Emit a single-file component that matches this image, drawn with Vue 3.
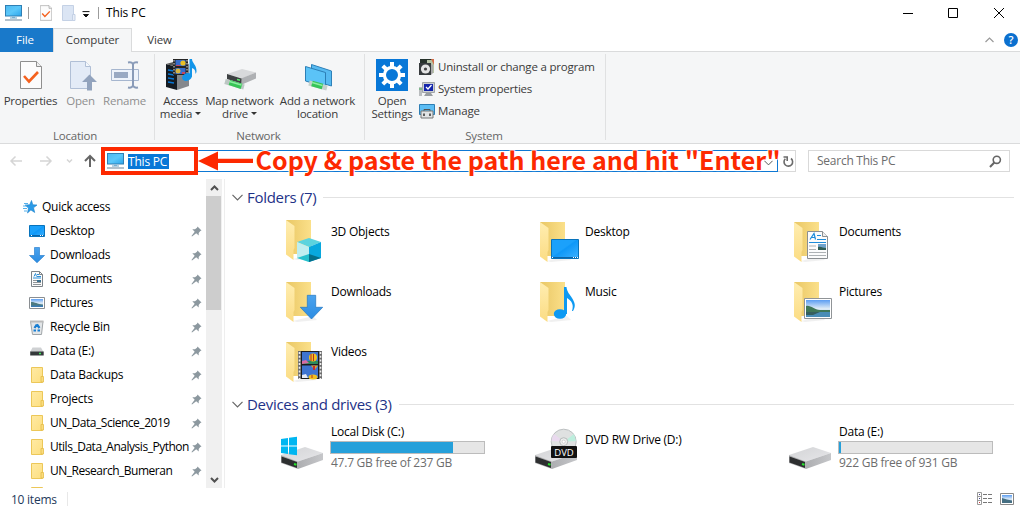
<script setup>
const locationTools = [
  { label: ['Properties'], icon: 'properties', cls: 'w-prop' },
  { label: ['Open'], icon: 'open', cls: 'w-open', off: true },
  { label: ['Rename'], icon: 'rename', cls: 'w-rename', off: true },
]
const networkTools = [
  { label: ['Access', 'media'], icon: 'media', cls: 'w-media', drop: true },
  { label: ['Map network', 'drive'], icon: 'mapdrive', cls: 'w-map', drop: true },
  { label: ['Add a network', 'location'], icon: 'netloc', cls: 'w-add' },
]
const systemLinks = [
  { label: 'Uninstall or change a program', icon: 'uninstall' },
  { label: 'System properties', icon: 'sysprops' },
  { label: 'Manage', icon: 'manage' },
]
const quick = [
  { label: 'Desktop', icon: 's-desktop' },
  { label: 'Downloads', icon: 's-down' },
  { label: 'Documents', icon: 's-doc' },
  { label: 'Pictures', icon: 's-pic' },
  { label: 'Recycle Bin', icon: 's-bin' },
  { label: 'Data (E:)', icon: 's-drive' },
  { label: 'Data Backups', icon: 's-folder' },
  { label: 'Projects', icon: 's-folder' },
  { label: 'UN_Data_Science_2019', icon: 's-folder', tight: true },
  { label: 'Utils_Data_Analysis_Python', icon: 's-folder', tight: true },
  { label: 'UN_Research_Bumeran', icon: 's-folder', tight: true },
  { label: '', icon: 's-folder' },
]
const folders = [
  { label: '3D Objects', icon: 'o-cube', up: true },
  { label: 'Desktop', icon: 'o-desktop' },
  { label: 'Documents', icon: 'o-doc' },
  { label: 'Downloads', icon: 'o-down' },
  { label: 'Music', icon: 'o-music' },
  { label: 'Pictures', icon: 'o-pic' },
  { label: 'Videos', icon: 'o-video' },
]
const drives = [
  { label: 'Local Disk (C:)', badge: 'd-win', used: 80, free: '47.7 GB free of 237 GB' },
  { label: 'DVD RW Drive (D:)', badge: 'd-dvd' },
  { label: 'Data (E:)', used: 1.2, free: '922 GB free of 931 GB' },
]
</script>

<template>
  <div class="window">
    <svg class="defs" width="0" height="0" aria-hidden="true">
      <defs>
        <linearGradient id="gScreen" x1="0" y1="0" x2="1" y2="1">
          <stop offset="0" stop-color="#4db9f0" /><stop offset=".5" stop-color="#5cc8fa" /><stop offset="1" stop-color="#2ba4ea" />
        </linearGradient>
        <linearGradient id="gBack" x1="0" y1="0" x2="1" y2="0">
          <stop offset="0" stop-color="#e9c765" /><stop offset="1" stop-color="#fbe08a" />
        </linearGradient>
        <linearGradient id="gFlap" x1="0" y1="0" x2="0" y2="1">
          <stop offset="0" stop-color="#ffedb0" /><stop offset="1" stop-color="#fbdc83" />
        </linearGradient>
        <linearGradient id="gDesk" x1="0" y1="0" x2="1" y2="1">
          <stop offset="0" stop-color="#1ba1fb" /><stop offset=".45" stop-color="#1ba1fb" /><stop offset=".5" stop-color="#0e98f8" /><stop offset="1" stop-color="#3fb2ff" />
        </linearGradient>
        <linearGradient id="gArrow" x1="0" y1="0" x2="0" y2="1">
          <stop offset="0" stop-color="#4ba3ee" /><stop offset="1" stop-color="#2b8ce2" />
        </linearGradient>
        <linearGradient id="gTop" x1="0" y1="0" x2="1" y2="1">
          <stop offset="0" stop-color="#d3d4d6" /><stop offset="1" stop-color="#e6e6e9" />
        </linearGradient>
        <linearGradient id="gSide" x1="0" y1="0" x2="1" y2="0">
          <stop offset="0" stop-color="#adaeb1" /><stop offset="1" stop-color="#c6c7ca" />
        </linearGradient>
        <linearGradient id="gSky" x1="0" y1="0" x2="0" y2="1">
          <stop offset="0" stop-color="#5b9df2" /><stop offset=".5" stop-color="#dceaf6" /><stop offset="1" stop-color="#b8d4ea" />
        </linearGradient>
        <linearGradient id="gSmallF" x1="0" y1="0" x2="1" y2="1">
          <stop offset="0" stop-color="#ffeaa4" /><stop offset="1" stop-color="#fddf80" />
        </linearGradient>

        <symbol id="pc" viewBox="0 0 17 16">
          <rect x=".5" y=".5" width="16" height="10.5" fill="url(#gScreen)" stroke="#2f7fb4" />
          <path d="M7 11.5h3v1.5H7z" fill="#86b9d8" /><path d="M5 13h7" stroke="#6fa4c6" />
          <path d="M0 15h17" stroke="#8a9fb0" stroke-width="1.3" />
        </symbol>
        <symbol id="pageCheck" viewBox="0 0 22 28">
          <path d="M.5.5h16l5 5v22H.5z" fill="#fcfcfc" stroke="#8f8f8f" /><path d="M16.500 .5v5h5" fill="#eee" stroke="#8f8f8f" />
          <path d="M4 15l5 5.500L18 11" fill="none" stroke="#f4611e" stroke-width="2.600" />
        </symbol>
        <symbol id="properties" viewBox="0 0 32 32"><use href="#pageCheck" x="5" y="2" width="22" height="28" /></symbol>
        <symbol id="open" viewBox="0 0 32 32">
          <path d="M5.500 2.500h15l5 5v22h-20z" fill="#e3ebf7" stroke="#b0bfd6" /><path d="M20.500 2.500v5h5" fill="#f3f7fc" stroke="#b0bfd6" />
          <path d="M24.500 15.500l7.500 7.500h-5v8.500h-5V23h-5z" fill="#92a3bd" />
        </symbol>
        <symbol id="rename" viewBox="0 0 32 32">
          <path d="M2.500 10.500h27v11h-27z" fill="#eef3fb" stroke="#a6b6cf" /><path d="M5 13h14v6H5z" fill="#99a9c3" />
          <path d="M19 3.500c3-.5 5 0 5 2.500v20c0 2-2 3-5 2.500M29 3.500c-3-.5-5 0-5 2.500v20c0 2 2 3 5 2.500" fill="none" stroke="#899bb8" stroke-width="2" />
        </symbol>
        <symbol id="media" viewBox="0 0 32 32">
          <path d="M1 5l11 3v23L1 28z" fill="#151b22" /><path d="M12 8l12-3v22l-12 4z" fill="#85888c" /><path d="M1 5l11-3 12 3-12 3z" fill="#555" />
          <path d="M3 11l6 1M3 15l6 1M3 19l6 1M3 23l6 1" stroke="#0878d8" stroke-width="1.400" />
          <path d="M8 0h15v16H8z" fill="#252525" /><path d="M10.500 1h10v6h-10zM10.500 9h10v6h-10z" fill="#366dcc" />
          <circle cx="18" cy="4" r="2.600" fill="#eabf25" /><circle cx="13" cy="12" r="2.500" fill="#d8b642" /><path d="M11 6h4v1h-4zM17 13h3v2h-3z" fill="#c5465d" />
          <path d="M9 1v15M22 1v15" stroke="#ddd" stroke-dasharray="1.500 1.500" />
          <ellipse cx="22" cy="18" rx="5" ry="3.700" transform="rotate(-20 22 18)" fill="#1295e9" /><path d="M24.500 17V0H27c0 4 5 6 4.500 13l-1 2c0-4-1-5-3.500-6v9z" fill="#1295e9" />
        </symbol>
        <symbol id="mapdrive" viewBox="0 0 32 32">
          <path d="M1 22.500l19 5.500" stroke="#bcc6c3" stroke-width="5" />
          <path d="M3 15l15-5L32 13.500l-14 6z" fill="#d8d9db" /><path d="M17 19.500l15-6v6l-14 6z" fill="#aeb0b3" /><path d="M3 15l14.500 4.500v5L3 20z" fill="#3d4042" /><path d="M13 20.500l3 .8" stroke="#5ce86d" stroke-width="1.500" />
          <path d="M5.500 23.500l12 3.800" stroke="#37c556" stroke-width="5.500" /><path d="M5.500 22.500l12 3.500" stroke="#8ceda0" stroke-width="1.500" />
        </symbol>
        <symbol id="netloc" viewBox="0 0 32 32">
          <path d="M9.500 5.500L29.500 12v15l-20-6z" fill="#56baf1" stroke="#2e81b9" />
          <path d="M3.500 7.500l20 6v14.500l-20-6z" fill="#5bc3f7" stroke="#2c7fb6" /><path d="M7 24l18 5" stroke="#c4d0cc" stroke-width="5" /><path d="M10 24.500l10.500 3" stroke="#37c45a" stroke-width="5.500" /><path d="M10 23.500l10.500 3" stroke="#8ceda0" stroke-width="1.500" />
        </symbol>
        <symbol id="gear" viewBox="0 0 32 32">
          <path d="M0 0h32v32H0z" fill="#0877d7" />
          <circle cx="16" cy="16" r="7.600" fill="none" stroke="#fff" stroke-width="3.200" />
          <g stroke="#fff" stroke-width="4"><path d="M16 3v5M16 24v5M3 16h5M24 16h5M6.800 6.800l3.200 3.200M22 22l3.200 3.200M6.800 25.200L10 22M22 10l3.200-3.200" /></g>
        </symbol>
        <symbol id="uninstall" viewBox="0 0 16 16">
          <path d="M1 0h12v6H1z" fill="#26312a" /><path d="M8 1h7v13H8z" fill="#b6c3a6" /><path d="M12 0h3v6z" fill="#d36d48" /><path d="M0 4h12v12H0z" fill="#373b3d" />
          <circle cx="6.500" cy="10" r="4.600" fill="#e4e4e4" /><circle cx="6.500" cy="10" r="1.600" fill="#444" /><path d="M12 5l2 1v8l-2 2z" fill="#aaa" />
        </symbol>
        <symbol id="sysprops" viewBox="0 0 16 16">
          <path d="M0 6h3v9H0z" fill="#b9bcbe" /><path d="M3.500 1.500h12v10h-12z" fill="#cdd0d3" stroke="#a0a4a8" /><path d="M5 3h9v7H5z" fill="#1425ac" />
          <path d="M7 6l2 2 3.500-4" fill="none" stroke="#fff" stroke-width="1.300" /><path d="M7 12h5l2 3H5z" fill="#999da1" /><path d="M0 8h3" stroke="#45b05b" />
        </symbol>
        <symbol id="manage" viewBox="0 0 16 16">
          <path d="M.5 1.500h15v10H.5z" fill="#5cbdf4" stroke="#2e7eb4" /><path d="M5 6.500h6v2H5z" fill="none" stroke="#555" /><path d="M2 8h12v7H2z" fill="#e2e4e5" stroke="#777" /><path d="M5 10.500v2.500M11 10.500v2.500" stroke="#333" stroke-width="1.500" />
        </symbol>

        <symbol id="star" viewBox="0 0 14 14">
          <path d="M8.500.5l1.300 4.300 4.200.2-3.500 2.800 1.200 4.700-3.800-2.600L4.500 13l1-4.900L2 5l4.700-.2z" fill="#2b9be8" stroke="#1a7fc9" stroke-width=".6" /><path d="M1 3.500h4M0 6h4M0 8.500h4M1 11h3" stroke="#54b0ec" />
        </symbol>
        <symbol id="s-desktop" viewBox="0 0 16 16"><path d="M.5 2.500h15v11H.5z" fill="url(#gDesk)" stroke="#0873bc" /><path d="M1 12.500h14" stroke="#0c65a8" /><path d="M2 12.500h1M11 12.500h1M13 12.500h1" stroke="#fff" /></symbol>
        <symbol id="s-down" viewBox="0 0 16 16"><path d="M5.500.5h5v8h5L8 15.700.5 8.500h5z" fill="url(#gArrow)" stroke="#2c82d0" stroke-width=".7" /></symbol>
        <symbol id="s-doc" viewBox="0 0 16 16">
          <path d="M2.500.5h8l3 3v12h-11z" fill="#fbfbfb" stroke="#7d8388" /><path d="M10.500.5v3h3" fill="none" stroke="#7d8388" /><path d="M5 5.500l1.500-3 1 3M8 3.500h2M4 7h8M8 5.500h4" fill="none" stroke="#2c8fd8" /><path d="M4 9.500h4M4 11.500h8M4 13.500h8" stroke="#909599" /><path d="M8 9h4v2H8z" fill="#397090" />
        </symbol>
        <symbol id="s-pic" viewBox="0 0 16 16"><path d="M.5 2.500h15v11H.5z" fill="#fff" stroke="#8a8e92" /><path d="M2 4h12v8H2z" fill="url(#gSky)" /><path d="M2 7c4 0 6 2 12 2.500V12H2z" fill="#4d7a80" /><path d="M2 10.500h12V12H2z" fill="#3a7cb5" /></symbol>
        <symbol id="s-bin" viewBox="0 0 16 16"><path d="M1.500 2.500h12.500l-1.500 13h-9z" fill="#e3e6e8" stroke="#a0a5a8" /><path d="M1 2.500h13.500" stroke="#bbb" stroke-width="2" /><path d="M7.800 5.500L5.500 9M8 5.500L10.500 9M4.500 11.500H7M8.500 11.500H11" stroke="#197ed2" stroke-width="2.200" /></symbol>
        <symbol id="s-drive" viewBox="0 0 16 16"><path d="M3.500 4.500h8.500L14.500 9H1.200z" fill="#cfd1d3" /><path d="M1.200 8.500h13.500v4H1.200z" fill="#35393b" /><path d="M10 10.500h2" stroke="#40e55b" stroke-width="1.500" /></symbol>
        <symbol id="s-folder" viewBox="0 0 16 16"><path d="M2.500.5h11v15h-11z" fill="url(#gSmallF)" stroke="#ecc758" /><path d="M12 9.500h2.500v5.500H12z" fill="#fbdc7d" stroke="#e5bd49" stroke-width=".8" /></symbol>
        <symbol id="pin" viewBox="0 0 11 11"><path d="M6.500 0.500L10.500 4.500 9.300 5 7.700 7v2.500L5.200 7.200 1 10.500.5 10 3.700 5.800 1.300 3.300H4L6 1.700z" fill="#8c989f" /></symbol>

        <symbol id="folder" viewBox="0 0 48 48">
          <path d="M13 45l4 1 20-2-4-4z" fill="#e9e9e9" opacity=".7" />
          <path d="M6 6h25v34H13z" fill="url(#gBack)" /><path d="M6 6l8.500 6v22L13.500 36v10L6 40.500z" fill="url(#gFlap)" />
        </symbol>
        <symbol id="o-cube" viewBox="0 0 48 48"><path d="M17 26l12-4 12 4-12 5z" fill="#5cd3de" /><path d="M17 26l12 5v15l-12-4z" fill="#bfeef0" /><path d="M29 31l12-5v16l-12 4z" fill="#08a8de" /><path d="M17 42l12-4v8z" fill="#25c1cd" /><path d="M29 38l12 4-12 4z" fill="#046f8a" /></symbol>
        <symbol id="o-desktop" viewBox="0 0 48 48"><path d="M17.500 23.500h27v19h-27z" fill="url(#gDesk)" stroke="#0873bc" /><path d="M18 41.500h26" stroke="#0c65a8" /><path d="M18 41.500h1M39 41.500h1M41 41.500h1M43 41.500h1" stroke="#fff" /></symbol>
        <symbol id="o-doc" viewBox="0 0 48 48">
          <path d="M19.500 15.500h15l5 5v22h-20z" fill="#fcfcfc" stroke="#8b8f92" /><path d="M34.500 15.500v5h5" fill="#eee" stroke="#8b8f92" />
          <path d="M22 23.500l4-6 1.500 6M23.500 21.500h3.500M29 19.500h4M29 23.500h9M21 26.500h17" fill="none" stroke="#1e8cdb" stroke-width="1.200" /><path d="M21 30h7M21 33.500h7M21 36.500h17M21 39.500h17" stroke="#aeb2b5" /><path d="M30 28h8v6h-8z" fill="#6fa2cb" /><path d="M30 31c3-1 5 1 8 1v2h-8z" fill="#305d53" />
        </symbol>
        <symbol id="o-down" viewBox="0 0 48 48"><path d="M27.300 19.300h8.400v12h7L31.500 43 20.300 31.300h7z" fill="url(#gArrow)" stroke="#2377c2" stroke-width=".7" /></symbol>
        <symbol id="o-music" viewBox="0 0 48 48"><ellipse cx="26" cy="38" rx="6.200" ry="4.800" fill="#0c99f2" /><path d="M30 38V11h2.500c.5 5 3 7 5.500 11 3 5 4 8 1 13h-1c2-6 0-10-5-13v16z" fill="#0c99f2" /></symbol>
        <symbol id="o-pic" viewBox="0 0 48 48"><path d="M16.500 22.500h27v20h-27z" fill="#fff" stroke="#909497" /><path d="M18 24h24v17H18z" fill="url(#gSky)" /><path d="M18 30c5-1 8 4 14 4h10v2H18z" fill="#3f7758" /><path d="M18 36h24v5H18z" fill="#4a8db6" /><path d="M18 36h14l-7 3h-7z" fill="#355f5f" /></symbol>
        <symbol id="o-video" viewBox="0 0 48 48">
          <path d="M18 15h24v28H18z" fill="#6d6d6d" /><path d="M21 15h18v28H21z" fill="#1d1d1d" /><path d="M22 16h16v12H22zM22 29.500h16V42H22z" fill="#3e74cf" />
          <path d="M22 25h16v3H22z" fill="#2b8a5b" /><path d="M22 25l4-1 3 3-7 1z" fill="#d86ba4" /><circle cx="33" cy="21.500" r="4" fill="#f1c11d" /><path d="M31 18v7M33.500 18v7" stroke="#b52c27" /><path d="M31 29.500h7L34.500 34z" fill="#e2a129" /><path d="M33 30h2v4h-2z" fill="#c52d2d" /><ellipse cx="33" cy="41" rx="4.500" ry="2.500" fill="#f1c11d" /><path d="M32 39v3" stroke="#b52c27" /><path d="M22 39l4-1 2 4h-6z" fill="#e6eaf4" />
          <path d="M19.500 16v27M40.500 16v27" stroke="#eee" stroke-width="1.600" stroke-dasharray="2 1.700" />
        </symbol>
        <symbol id="drive" viewBox="0 0 48 48"><path d="M1 30l24-8 18 6-25 8.500z" fill="url(#gTop)" /><path d="M18 36.500L43 28v7L18 44z" fill="url(#gSide)" /><path d="M1 30l17 6.500V44L1 38z" fill="#b0b1b3" /><path d="M1.500 31.500L17 37v6L1.500 37.500z" fill="#2d2f30" /><path d="M14 39l2.500.8" stroke="#25e42b" stroke-width="2" /></symbol>
        <symbol id="d-win" viewBox="0 0 48 48"><path d="M1 14l7-1v7.500H1zM9 12.800L17 11.700v8.800H9zM1 21.500h7V29l-7-1zM9 21.500h8v8.800L9 29.200z" fill="#00b6f1" /></symbol>
        <symbol id="d-dvd" viewBox="0 0 48 48">
          <circle cx="29.700" cy="16.700" r="12.500" fill="#dfe1e1" stroke="#bcc0c1" /><path d="M29.700 16.700L20 9a12 12 0 0 0-2.500 7z" fill="#e9d9ee" /><path d="M29.700 16.700L40 9l2 7z" fill="#bdeedd" /><circle cx="29.700" cy="16.700" r="4" fill="#eceded" stroke="#b7bbbb" /><circle cx="29.700" cy="16.700" r="1.600" fill="#fff" stroke="#bbb" stroke-width=".6" />
          <rect x="17" y="21" width="26" height="12" rx="1" fill="#111" />
        </symbol>
        <symbol id="chev" viewBox="0 0 11 7"><path d="M.5 .8L5.500 5.800l5-5" fill="none" stroke="currentColor" stroke-width="1.200" /></symbol>
      </defs>
    </svg>

    <header class="title">
      <svg class="t-pc" width="17" height="16"><use href="#pc" /></svg>
      <i class="t-sep"></i>
      <svg class="t-check" width="12" height="16"><use href="#pageCheck" /></svg>
      <svg class="t-folder" width="14" height="16" viewBox="0 0 14 16"><path d="M.5.500h11v15H.5z" fill="#dbe5f4" stroke="#c4d1e5" /><path d="M10.500 9.500h2.500v6h-2.500z" fill="#e8eef8" stroke="#c4d1e5" /></svg>
      <svg class="t-drop" width="8" height="7" viewBox="0 0 8 7"><path d="M.5.600h7M1.500 3.500h5L4 6z" fill="#111" stroke="#111" stroke-width="1" /></svg>
      <i class="t-sep two"></i>
      <span class="t-name">This PC</span>
      <svg class="winbtns" width="104" height="12" viewBox="0 0 104 12" fill="none" stroke="#000"><path d="M1 6.500h10M46.500 1.500h9v9h-9zM92 1l10 10M102 1L92 11" /></svg>
    </header>

    <nav class="tabs">
      <span class="tab file">File</span><span class="tab current">Computer</span><span class="tab view">View</span>
      <svg class="collapse" width="9" height="6" viewBox="0 0 9 6"><path d="M.5 5l4-4 4 4" fill="none" stroke="#999" stroke-width="1.200" /></svg>
      <span class="help">?</span>
    </nav>

    <section class="ribbon">
      <div class="group g-loc">
        <div class="tools">
          <div v-for="t in locationTools" :key="t.icon" class="tool" :class="[t.cls, { off: t.off }]">
            <svg width="32" height="32"><use :href="'#' + t.icon" /></svg><span v-for="l in t.label" :key="l">{{ l }}</span>
          </div>
        </div>
        <div class="caption">Location</div>
      </div>
      <div class="group g-net">
        <div class="tools">
          <div v-for="t in networkTools" :key="t.icon" class="tool" :class="t.cls">
            <svg width="32" height="32"><use :href="'#' + t.icon" /></svg>
            <span v-for="(l, i) in t.label" :key="l">{{ l }}<b v-if="t.drop && i === 1" class="caret"></b></span>
          </div>
        </div>
        <div class="caption">Network</div>
      </div>
      <div class="group g-sys">
        <div class="tools">
          <div class="tool w-set"><svg width="32" height="32"><use href="#gear" /></svg><span>Open</span><span>Settings</span></div>
          <div class="links">
            <div v-for="s in systemLinks" :key="s.icon" class="link"><svg width="16" height="16"><use :href="'#' + s.icon" /></svg><span>{{ s.label }}</span></div>
          </div>
        </div>
        <div class="caption">System</div>
      </div>
    </section>

    <section class="address">
      <svg class="arrows" width="101" height="16" viewBox="0 0 101 16" fill="none">
        <g stroke="#d5d5d5" stroke-width="1.500"><path d="M22 8H11M15.500 3.500L11 8l4.500 4.500M40 8h11M46.500 3.500L51 8l-4.500 4.500" /><path d="M67 6.500l2.500 2.500L72 6.500" /></g>
        <path d="M90 14V3M85 8l5-5 5 5" stroke="#666" stroke-width="2" />
      </svg>
      <div class="path">
        <div class="redbox"><svg width="17" height="16"><use href="#pc" /></svg><span class="selected">This PC</span></div>
        <div class="note">
          <svg width="55" height="20" viewBox="0 0 55 20"><path d="M0 10L20 .5v7.300h35v4.200H20v7.500z" fill="#fd2900" /></svg>
          <span>Copy &amp; paste the path here and hit "Enter"</span>
        </div>
        <svg class="path-chev" width="9" height="6"><use href="#chev" /></svg>
      </div>
      <div class="refresh"><svg width="12" height="13" viewBox="0 0 12 13" fill="none" stroke="#6b6b6b" stroke-width="1.600"><path d="M9 3.500A4.300 4.300 0 1 1 3.300 3.800" /><path d="M1.500 2h3.700v4" /></svg></div>
      <div class="search"><span>Search This PC</span><svg width="13" height="13" viewBox="0 0 13 13" fill="none" stroke="#666" stroke-width="1.600"><circle cx="7.800" cy="4.800" r="3.600" /><path d="M5.300 7.500L1 12" stroke-width="2" /></svg></div>
    </section>

    <main class="body">
      <aside class="side">
        <div class="row root"><svg width="14" height="14"><use href="#star" /></svg><span>Quick access</span></div>
        <div v-for="(q, i) in quick" :key="i" class="row" :class="{ tight: q.tight }">
          <svg width="16" height="16"><use :href="'#' + q.icon" /></svg><span>{{ q.label }}</span>
          <svg v-if="q.label" class="pin" width="11" height="11"><use href="#pin" /></svg>
        </div>
      </aside>
      <div class="scroll">
        <svg width="9" height="6" viewBox="0 0 9 6"><path d="M1 5l3.500-3.500L8 5" fill="none" stroke="#505050" stroke-width="2" /></svg>
        <div class="thumb"></div>
        <svg class="dn" width="9" height="6" viewBox="0 0 9 6"><path d="M1 1l3.500 3.500L8 1" fill="none" stroke="#505050" stroke-width="2" /></svg>
      </div>
      <div class="content">
        <h2><svg width="11" height="7"><use href="#chev" /></svg><span>Folders (7)</span><i></i></h2>
        <div class="grid">
          <div v-for="f in folders" :key="f.label" class="item">
            <svg width="48" height="48" viewBox="0 0 48 48"><use href="#folder" :y="f.up ? -2 : 0" width="48" height="48" /><use :href="'#' + f.icon" width="48" height="48" /></svg>
            <span class="name">{{ f.label }}</span>
          </div>
        </div>
        <h2><svg width="11" height="7"><use href="#chev" /></svg><span>Devices and drives (3)</span><i></i></h2>
        <div class="grid drives">
          <div v-for="d in drives" :key="d.label" class="item">
            <svg width="48" height="48" viewBox="0 0 48 48"><use href="#drive" width="48" height="48" /><use v-if="d.badge" :href="'#' + d.badge" width="48" height="48" /><text v-if="d.badge === 'd-dvd'" class="dvd" x="30" y="30.500">DVD</text></svg>
            <div v-if="d.free" class="info">
              <span>{{ d.label }}</span>
              <div class="bar"><div :style="{ width: d.used + '%' }"></div></div>
              <span class="free">{{ d.free }}</span>
            </div>
            <span v-else class="name">{{ d.label }}</span>
          </div>
        </div>
      </div>
    </main>

    <footer class="status">
      <span>10 items</span><i></i>
      <svg class="v-list" width="16" height="13" viewBox="0 0 16 13"><path d="M.5.500h4v12h-4zM.5 4.500h4M.5 8.500h4" fill="#fff" stroke="#9a9a9a" /><path d="M6 2.500h4M11 2.500h4M6 6.500h4M11 6.500h4M6 10.500h4M11 10.500h4" stroke="#777" /><path d="M2 2.500h1M2 6.500h1" stroke="#448" /><path d="M2 10.500h1" stroke="#c33" /></svg>
      <svg width="14" height="12" viewBox="0 0 14 12"><path d="M.5.500h13v11H.5z" fill="#fff" stroke="#888" /><path d="M2 2h10v8H2z" fill="url(#gSky)" /><path d="M2 5l5 1.500 5 1V10H2z" fill="#456f83" /></svg>
    </footer>
  </div>
</template>

<style>
body { margin: 0; overflow: hidden; }
</style>
<style scoped>
.window { width: 1020px; height: 509px; overflow: hidden; display: flex; flex-direction: column; background: #fff; color: #000; font: 12px/14px "Open Sans", "Noto Sans", sans-serif; letter-spacing: -0.25px; }
.window * { box-sizing: border-box; }
.defs { position: absolute; }
svg { flex: none; display: block; }
span { white-space: nowrap; }

.title { height: 28px; flex: none; display: flex; align-items: center; padding: 0 16px 3px 5px; }
.t-sep { width: 1px; height: 12px; background: #9c9c9c; margin-left: 6px; }
.t-check { margin-left: 11px; }
.t-folder { margin-left: 10px; }
.t-drop { margin-left: 6px; margin-top: 4px; }
.t-sep.two { margin-left: 8px; }
.t-name { margin-left: 7px; letter-spacing: -0.15px; }
.winbtns { margin-left: auto; margin-right: -2px; }

.tabs { height: 24px; flex: none; display: flex; align-items: center; border-bottom: 1px solid #dadbdc; color: #3b3b3b; padding-right: 2px; }
.tab { height: 24px; line-height: 24px; margin-bottom: -1px; text-align: center; font-size: 11.5px; letter-spacing: -0.1px; }
.file { width: 53px; background: #1979ca; color: #fff; padding-right: 3px; }
.current { width: 79px; background: #f5f6f7; border: 1px solid #dadbdc; border-bottom: 0; line-height: 22px; }
.view { width: 55px; }
.collapse { margin-left: auto; margin-right: 10px; }
.help { width: 14px; height: 14px; border-radius: 50%; background: #0b70cf; color: #fff; text-align: center; font-size: 11px; line-height: 14px; font-weight: 600; }

.ribbon { height: 92px; flex: none; display: flex; background: #f5f6f7; border-bottom: 1px solid #dadbdc; padding-top: 2px; color: #3b3b3b; font-size: 11.5px; letter-spacing: -0.2px; }
.group { height: 86px; border-right: 1px solid #e0e1e2; display: flex; flex-direction: column; }
.g-loc { width: 155px; }
.g-net { width: 210px; }
.g-sys { width: 241px; }
.tools { height: 72px; flex: none; display: flex; padding-top: 5px; }
.tool { display: flex; flex-direction: column; align-items: center; line-height: 13px; flex: none; }
.tool svg { margin-bottom: 3px; }
.off { color: #8f8f8f; }
.w-prop { width: 61px; }
.w-open { width: 39px; }
.w-rename { width: 49px; }
.w-media { width: 51px; }
.w-map { width: 67px; }
.w-add { width: 89px; }
.w-set { width: 54px; }
.caret { display: inline-block; border: 3px solid transparent; border-top-color: #333; border-bottom: 0; margin: 0 0 3px 3px; }
.link { display: flex; align-items: center; height: 16px; gap: 3px; }
.link:nth-child(2) { height: 28px; }
.caption { line-height: 20px; text-align: center; color: #666; }
.g-loc .caption { padding-right: 4px; }
.g-net .caption { padding-right: 2px; }
.g-sys .caption { padding-right: 2px; }

.address { height: 35px; flex: none; display: flex; align-items: flex-start; padding-top: 6px; }
.arrows { margin-top: 3px; }
.path { width: 677px; height: 22px; border: 1px solid #0e78d4; position: relative; }
.path-chev { position: absolute; right: 4px; top: 9px; color: #555; }
.redbox { position: absolute; left: -1px; top: -4px; width: 97px; height: 28px; border: 4px solid #fd2900; background: #fff; display: flex; align-items: center; padding-left: 2px; }
.selected { background: #0877d7; color: #fff; margin-left: 4px; line-height: 15px; width: 41px; letter-spacing: -0.2px; }
.note { position: absolute; left: 96px; top: -12px; height: 40px; display: flex; align-items: center; color: #fd2900; }
.note svg { margin-top: 4px; }
.note span { font: bold 25px/40px "Noto Sans CJK SC", sans-serif; letter-spacing: 0.05px; margin-left: 2.5px; text-shadow: 1px 0 1px #fff, -1px 0 1px #fff, 0 1px 1px #fff, 0 -1px 1px #fff; }
.refresh { width: 18px; height: 22px; border: 1px solid #d9d9d9; border-left: 0; padding: 4px 0 0 4px; }
.search { width: 202px; height: 22px; margin-left: 12px; border: 1px solid #d9d9d9; display: flex; align-items: center; justify-content: space-between; padding: 0 7px 0 8px; color: #6d6d6d; }

.body { height: 309px; flex: none; display: flex; overflow: hidden; }
.side { width: 206px; padding-top: 16px; overflow: hidden; }
.row { height: 24px; display: flex; align-items: center; padding-left: 29px; }
.row.root { padding-left: 23px; }
.row span { margin-left: 5px; width: 140px; overflow: hidden; line-height: 20px; }
.row.tight { letter-spacing: -0.48px; }
.pin { margin-left: 1px; }
.scroll { width: 16px; background: #f0f0f0; display: flex; flex-direction: column; align-items: center; padding-top: 6px; }
.thumb { width: 15px; height: 114px; background: #cdcdcd; margin-top: 5px; align-self: flex-start; }
.dn { margin: auto 0 5px; }
.content { margin-left: 2px; border-left: 1px solid #eee; width: 790px; padding: 9px 0 0 7px; }
h2 { margin: 0; height: 18px; display: flex; align-items: center; font-size: 15px; font-weight: 400; color: #1e3287; letter-spacing: -0.3px; }
h2 svg { color: #666; margin-right: 4px; }
h2 i { flex: 1; height: 1px; background: #e2e2e2; margin-left: 7px; }
.grid { display: grid; grid-template-columns: repeat(3, 254px); grid-auto-rows: 60px; padding: 10px 0 0 48px; }
.grid + h2 { margin-top: -1px; }
.item { display: flex; align-items: flex-start; }
.name { margin: 9px 0 0 3px; }
.drives { padding-top: 12px; }
.drives .name { margin-top: 8px; }
.info { margin-left: 2px; width: 155px; display: flex; flex-direction: column; }
.info span { margin-left: 1px; }
.bar { height: 13px; border: 1px solid #bcbcbc; background: #e6e6e6; margin: 2px 0; }
.bar div { height: 100%; background: #26a0da; }
.free { color: #6d6d6d; }
.dvd { font-size: 9.500px; fill: #fff; text-anchor: middle; letter-spacing: 0; }

.status { height: 21px; flex: none; display: flex; align-items: center; padding: 0 6px 0 11px; color: #1e395b; }
.status > span { margin-top: 2px; }
.status i { width: 1px; height: 14px; background: #e8e8e8; margin-left: 10px; }
.v-list { margin-left: auto; margin-right: 7px; }
</style>
